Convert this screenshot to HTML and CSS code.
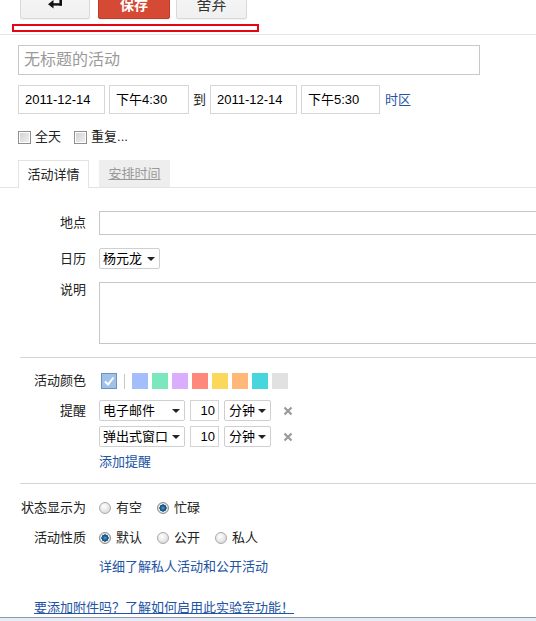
FILE: index.html
```html
<!DOCTYPE html>
<html lang="zh-CN">
<head>
<meta charset="utf-8">
<title>活动编辑</title>
<link rel="stylesheet" href="styles.css">
</head>
<body>
<div class="page">
  <div class="toolbar">
    <button class="btn back" type="button" aria-label="返回">
      <svg class="back-icon" width="14" height="13" viewBox="0 0 14 13"><polygon points="0,8.3 5.5,4 5.5,12.6" fill="#111"/><rect x="4" y="7.2" width="10" height="2.4" fill="#111"/><rect x="11.4" y="0" width="2.6" height="9.6" fill="#111"/></svg>
    </button>
    <button class="btn save" type="button">保存</button>
    <button class="btn discard" type="button">舍弃</button>
  </div>
  <div class="highlight"></div>
  <div class="rule-top"></div>

  <div class="head">
    <div class="title-input">无标题的活动</div>
    <div class="date-row">
      <div class="field date">2011-12-14</div>
      <div class="field time">下午4:30</div>
      <span class="to">到</span>
      <div class="field date">2011-12-14</div>
      <div class="field time time2">下午5:30</div>
      <a class="link tz" href="#">时区</a>
    </div>
    <div class="check-row">
      <span class="check"><span class="cb"></span>全天</span>
      <span class="check"><span class="cb"></span>重复...</span>
    </div>
  </div>

  <div class="tabs">
    <div class="tab active">活动详情</div>
    <div class="tab inactive">安排时间</div>
  </div>

  <div class="details">
    <div class="row r-loc">
      <div class="label">地点</div>
      <div class="box loc"></div>
    </div>
    <div class="row r-cal">
      <div class="label">日历</div>
      <div class="select cal"><span>杨元龙</span><span class="arrow"></span></div>
    </div>
    <div class="row r-desc">
      <div class="label">说明</div>
      <div class="box desc"></div>
    </div>

    <div class="sep"></div>

    <div class="row r-color">
      <div class="label">活动颜色</div>
      <div class="swatches">
        <span class="swatch checked"><svg width="14" height="14" viewBox="0 0 14 14"><polyline points="3,7.5 6,10.5 11.5,3.5" fill="none" stroke="#fff" stroke-width="2"/></svg></span>
        <span class="swatch-bar"></span>
        <span class="swatch" style="background:#a4bdfc"></span>
        <span class="swatch" style="background:#7ae7bf"></span>
        <span class="swatch" style="background:#dbadff"></span>
        <span class="swatch" style="background:#ff887c"></span>
        <span class="swatch" style="background:#fbd75b"></span>
        <span class="swatch" style="background:#ffb878"></span>
        <span class="swatch" style="background:#46d6db"></span>
        <span class="swatch" style="background:#e1e1e1"></span>
      </div>
    </div>

    <div class="row r-rem1">
      <div class="label">提醒</div>
      <div class="select method"><span>电子邮件</span><span class="arrow"></span></div>
      <div class="num">10</div>
      <div class="select unit"><span>分钟</span><span class="arrow"></span></div>
      <svg class="remove" width="10" height="10" viewBox="0 0 10 10"><path d="M1.5 1.5 L8.5 8.5 M8.5 1.5 L1.5 8.5" stroke="#9a9a9a" stroke-width="2.2"/></svg>
    </div>
    <div class="row r-rem2">
      <div class="label"></div>
      <div class="select method"><span>弹出式窗口</span><span class="arrow"></span></div>
      <div class="num">10</div>
      <div class="select unit"><span>分钟</span><span class="arrow"></span></div>
      <svg class="remove" width="10" height="10" viewBox="0 0 10 10"><path d="M1.5 1.5 L8.5 8.5 M8.5 1.5 L1.5 8.5" stroke="#9a9a9a" stroke-width="2.2"/></svg>
    </div>
    <div class="row r-add">
      <div class="label"></div>
      <a class="link" href="#">添加提醒</a>
    </div>

    <div class="sep sep2"></div>

    <div class="row r-status">
      <div class="label">状态显示为</div>
      <span class="opt"><span class="radio"></span>有空</span>
      <span class="opt"><span class="radio on"></span>忙碌</span>
    </div>
    <div class="row r-vis">
      <div class="label">活动性质</div>
      <span class="opt"><span class="radio on"></span>默认</span>
      <span class="opt"><span class="radio"></span>公开</span>
      <span class="opt"><span class="radio"></span>私人</span>
    </div>
    <div class="row r-more">
      <div class="label"></div>
      <a class="link" href="#">详细了解私人活动和公开活动</a>
    </div>
  </div>

  <div class="footer">
    <a class="link under" href="#">要添加附件吗？了解如何启用此实验室功能！</a>
  </div>
  <div class="bottom-band"></div>
</div>
</body>
</html>
```
FILE: styles.css
```css
html, body {
  margin: 0;
  padding: 0;
  overflow: hidden;
  background: #fff;
}
body {
  font-family: "Liberation Sans", Arial, "Noto Sans CJK SC", sans-serif;
  font-size: 13px;
  line-height: 16px;
  color: #222;
}
.page {
  width: 536px;
  overflow: hidden;
}

/* toolbar */
.toolbar {
  display: flex;
  margin-top: -10px;
  padding-left: 20px;
  height: 29px;
}
.btn {
  height: 29px;
  box-sizing: border-box;
  border: 1px solid #d9d9d9;
  border-radius: 2px;
  background: linear-gradient(#f6f6f6, #f0f0f0);
  box-shadow: 0 1px 1px rgba(0,0,0,0.06);
  color: #333;
  font-family: inherit;
  font-size: 15px;
  display: flex;
  align-items: center;
  justify-content: center;
  padding: 0;
  line-height: 16px;
}
.back { width: 70px; }
.back-icon { margin-bottom: 4px; }
.save {
  width: 72px;
  margin-left: 8px;
  background: #d44a35;
  border-color: #c43c28;
  color: #fff;
  font-weight: bold;
  font-size: 14px;
}
.discard { width: 71px; margin-left: 6px; }

.highlight {
  margin: 5px 0 0 12px;
  width: 247px;
  height: 8px;
  box-sizing: border-box;
  border: 2px solid #e30613;
}
.rule-top {
  margin-top: 2px;
  border-top: 1px solid #e5e5e5;
}

/* header fields */
.head { padding-left: 18px; }
.title-input {
  margin-top: 10px;
  width: 462px;
  height: 30px;
  box-sizing: border-box;
  border: 1px solid #c9c9c9;
  padding-left: 5px;
  font-size: 16px;
  color: #9a9a9a;
  display: flex;
  align-items: center;
}
.date-row {
  margin-top: 10px;
  display: flex;
  align-items: center;
  height: 29px;
}
.field {
  height: 29px;
  box-sizing: border-box;
  border: 1px solid #d6d6d6;
  padding-left: 6px;
  display: flex;
  align-items: center;
  color: #000;
}
.date { width: 87px; }
.time { width: 80px; margin-left: 4px; }
.time2 { width: 79px; }
.to { margin: 0 4px; color: #222; }
.tz { margin-left: 5px; }

.link { color: #2254a3; text-decoration: none; }
.link.under { text-decoration: underline; }

.check-row {
  margin-top: 15px;
  display: flex;
  align-items: center;
  height: 16px;
}
.check { display: flex; align-items: center; }
.check + .check { margin-left: 13px; }
.cb {
  width: 13px;
  height: 13px;
  box-sizing: border-box;
  border: 1px solid #8e8e8e;
  background: linear-gradient(135deg, #cfcfcf, #f3f3f3);
  box-shadow: inset 0 0 0 1px #fff;
  margin-right: 4px;
}

/* tabs */
.tabs {
  display: flex;
  padding-left: 18px;
  margin-top: 15px;
  border-bottom: 1px solid #e3e3e3;
  height: 27px;
}
.tab {
  width: 71px;
  height: 27px;
  box-sizing: border-box;
  display: flex;
  align-items: center;
  justify-content: center;
}
.tab.active {
  height: 28px;
  border: 1px solid #e3e3e3;
  border-bottom: none;
  background: #fff;
  color: #222;
  position: relative;
  z-index: 1;
}
.tab.inactive {
  margin-left: 10px;
  background: #eeeeee;
  color: #999;
  text-decoration: underline;
}

/* details */
.row { display: flex; align-items: center; }
.label {
  width: 86px;
  flex: none;
  text-align: right;
  margin-right: 13px;
  color: #222;
}
.box {
  flex: none;
  width: 470px;
  box-sizing: border-box;
  border: 1px solid #c6c6c6;
  background: #fff;
}
.r-loc { margin-top: 23px; }
.loc { height: 24px; }
.r-cal { margin-top: 13px; }
.r-desc { margin-top: 13px; align-items: flex-start; }
.desc { height: 62px; }

.sep {
  margin: 13px 0 0 20px;
  border-top: 1px solid #d5d5d5;
}

.select {
  flex: none;
  height: 21px;
  box-sizing: border-box;
  border: 1px solid #cfcfcf;
  border-radius: 2px;
  background: #fff;
  display: flex;
  align-items: center;
  justify-content: space-between;
  padding: 0 4px 0 3px;
  color: #000;
}
.arrow {
  width: 0;
  height: 0;
  border-left: 4px solid transparent;
  border-right: 4px solid transparent;
  border-top: 4px solid #222;
}
.cal { width: 61px; }

.r-color { margin-top: 15px; height: 16px; }
.swatches { display: flex; align-items: center; padding-left: 2px; }
.swatch {
  width: 16px;
  height: 16px;
  box-sizing: border-box;
  margin-right: 4px;
  display: flex;
  align-items: center;
  justify-content: center;
}
.swatch.checked {
  background: #a0c2e8;
  border: 1px solid #6a93c4;
  margin-right: 7px;
}
.swatch-bar {
  width: 1px;
  height: 15px;
  background: #c8c8c8;
  margin-right: 7px;
}

.r-rem1 { margin-top: 11px; }
.r-rem2 { margin-top: 5px; }
.method { width: 86px; }
.num {
  flex: none;
  width: 29px;
  height: 21px;
  margin-left: 5px;
  box-sizing: border-box;
  border: 1px solid #d4d4d4;
  text-align: right;
  padding-right: 3px;
  display: flex;
  align-items: center;
  justify-content: flex-end;
  color: #000;
}
.unit { width: 47px; margin-left: 5px; padding-left: 4px; }
.remove { margin-left: 12px; flex: none; }

.r-add { margin-top: 7px; }
.sep2 { margin-top: 13px; }

.r-status { margin-top: 16px; }
.r-vis { margin-top: 14px; }
.opt { display: flex; align-items: center; margin-right: 15px; color: #222; }
.radio {
  width: 12px;
  height: 12px;
  box-sizing: border-box;
  border-radius: 50%;
  border: 1px solid #a9a9a9;
  background: radial-gradient(circle at 40% 35%, #ffffff 0, #e6e6e6 55%, #cfcfcf 100%);
  margin-right: 5px;
}
.radio.on {
  border-color: #8b8b8b;
  background: radial-gradient(circle at 50% 50%, #5aa6d8 0, #1f6aa3 1.8px, #0f4470 3.4px, #eaeaea 3.8px, #cdcdcd 6px);
}
.r-more { margin-top: 13px; }

.footer {
  margin-top: 25px;
  padding-left: 34px;
  height: 16px;
}
.bottom-band {
  margin-top: 1px;
  border-top: 1px solid #8f99a8;
  height: 10px;
  background: #e6edf7;
}
```
